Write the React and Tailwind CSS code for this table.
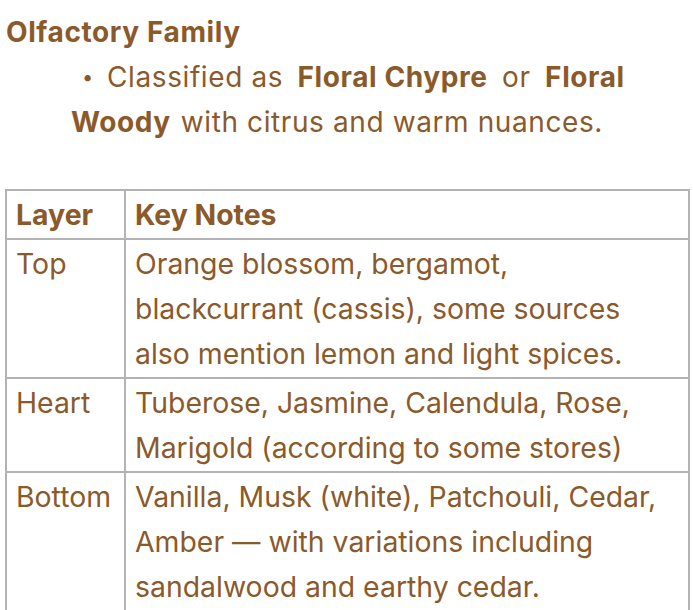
import React from 'react';

const rows = [
  { layer: 'Top', notes: ['Orange blossom, bergamot,', 'blackcurrant (cassis), some sources', 'also mention lemon and light spices.'] },
  { layer: 'Heart', notes: ['Tuberose, Jasmine, Calendula, Rose,', 'Marigold (according to some stores)'] },
  { layer: 'Bottom', notes: ['Vanilla, Musk (white), Patchouli, Cedar,', 'Amber — with variations including', 'sandalwood and earthy cedar.'] },
];

const App = () => {
  return (
    <div className="w-[693px] h-[610px] overflow-hidden bg-white text-[#8b5a2b]">
      <div className="pt-[10px] font-['Inter',sans-serif] text-[28px] leading-[45px] tracking-[0.6px]">
        <h3 className="pl-[6px] font-bold m-0 text-[28px]">Olfactory Family</h3>
        <p className="pl-[71px] pr-[30px]">
          <span className="inline-block w-[36px] pl-[11px] text-[20px] align-top">•</span>
          Classified as <b className="mx-[6px]">Floral Chypre</b> or <b className="ml-[6px] mr-[10px]">Floral Woody</b>
          with citrus and warm nuances.
        </p>
      </div>

      <table className="mt-[44px] ml-[5px] w-[685px] border-collapse font-['Inter',sans-serif] text-[28.4px] leading-[45px]">
        <thead>
          <tr>
            <th className="w-[119px] border-2 border-[#b3b3b3] px-[9px] py-[1px] text-left font-bold">Layer</th>
            <th className="border-2 border-[#b3b3b3] px-[9px] py-[1px] text-left font-bold">Key Notes</th>
          </tr>
        </thead>
        <tbody>
          {rows.map(r => (
            <tr key={r.layer}>
              <td className="border-2 border-[#b3b3b3] px-[9px] py-[1px] align-top">{r.layer}</td>
              <td className="border-2 border-[#b3b3b3] px-[9px] py-[1px] align-top">
                {r.notes.map(n => <div key={n} className="whitespace-nowrap">{n}</div>)}
              </td>
            </tr>
          ))}
        </tbody>
      </table>
    </div>
  );
};

export default App;
